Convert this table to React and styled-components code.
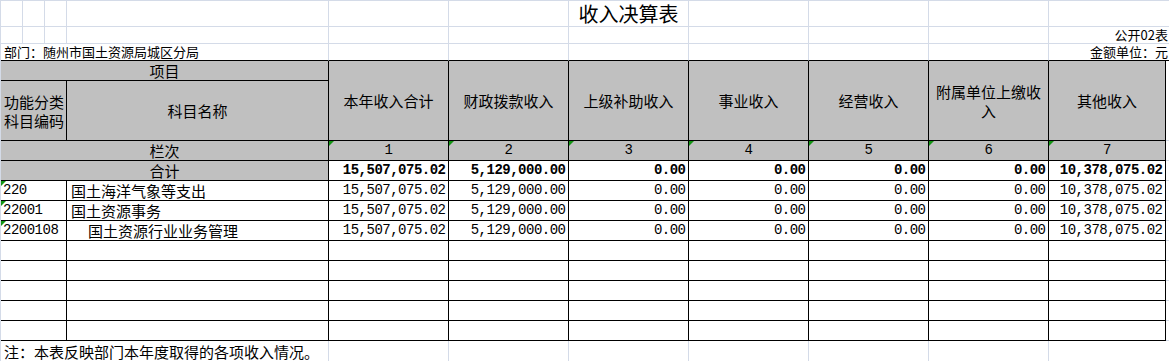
import styled, { createGlobalStyle, css } from "styled-components";

const GRID = "#d4dbe8";

const Global = createGlobalStyle`
  html, body {
    margin: 0;
    padding: 0;
    background: #fff;
  }
`;

const Sheet = styled.div`
  display: grid;
  grid-template-columns: 22px 22px 22px 262px repeat(6, 120px) 117px 1fr;
  grid-template-rows: 26px 17px 17px 20px 60px repeat(10, 20px) 21px;
  width: 1169px;
  height: 361px;
  box-sizing: border-box;
  overflow: hidden;
  border-top: 1px solid ${GRID};
  border-left: 1px solid ${GRID};
  background: #fff;
`;

const mark = css`
  &::before {
    content: "";
    position: absolute;
    top: 0;
    left: 0;
    border-top: 5px solid #149414;
    border-right: 5px solid transparent;
  }
`;

const Cell = styled.div`
  box-sizing: border-box;
  position: relative;
  grid-column: span ${(p) => p.$span || 1};
  grid-row: span ${(p) => p.$rows || 1};
  display: flex;
  align-items: center;
  justify-content: ${(p) =>
    p.$align === "right" ? "flex-end" : p.$align === "left" ? "flex-start" : "center"};
  text-align: ${(p) => p.$align || "center"};
  padding: 0 2px 0 ${(p) => (p.$indent != null ? p.$indent : 2)}px;
  border-right: 1px solid ${(p) => (p.$edge ? "#000" : GRID)};
  border-bottom: 1px solid ${(p) => (p.$base ? "#000" : GRID)};
  background: ${(p) => (p.$fill ? "#c0c0c0" : "#fff")};
  color: #000;
  font-family: "Noto Sans CJK SC", "Liberation Sans", sans-serif;
  font-size: 15px;
  line-height: 19px;
  white-space: nowrap;
  overflow: visible;
  ${(p) => p.$mark && mark}
`;

const Title = styled(Cell)`
  font-size: 20px;
  line-height: 24px;
  padding: 0;
`;

const Caption = styled(Cell)`
  font-size: 13px;
  line-height: 16px;
`;

const Head = styled(Cell)`
  white-space: normal;
  padding: 0 6px;
`;

const Stub = styled(Cell)`
  white-space: normal;
  padding: 0 0 0 3px;
`;

const Num = styled(Cell)`
  font-family: "Liberation Mono", monospace;
  font-size: 14px;
  letter-spacing: -0.5px;
  padding-right: ${(p) => (p.$align === "right" ? 2.5 : 2)}px;
  font-weight: ${(p) => (p.$bold ? 700 : 400)};
`;

const columns = [
  "本年收入合计",
  "财政拨款收入",
  "上级补助收入",
  "事业收入",
  "经营收入",
  "附属单位上缴收入",
  "其他收入",
];

const totals = [
  "15,507,075.02",
  "5,129,000.00",
  "0.00",
  "0.00",
  "0.00",
  "0.00",
  "10,378,075.02",
];

const items = [
  { code: "220", name: "国土海洋气象等支出", indent: 4 },
  { code: "22001", name: "国土资源事务", indent: 4 },
  { code: "2200108", name: "国土资源行业业务管理", indent: 21 },
];

const blanks = (n, props = {}) =>
  Array.from({ length: n }, (_, i) => <Cell key={i} {...props} />);

export default function App() {
  return (
    <>
      <Global />
      <Sheet>
        {/* row 1 */}
        {blanks(6)}
        <Title>收入决算表</Title>
        {blanks(3)}
        <Cell $span={2} />

        {/* row 2 */}
        {blanks(10)}
        <Caption $span={2} $align="right">
          公开02表
        </Caption>

        {/* row 3 */}
        <Caption $span={4} $align="left" $indent={3} $base>
          部门：随州市国土资源局城区分局
        </Caption>
        {blanks(6, { $base: true })}
        <Caption $span={2} $align="right" $base>
          金额单位：元
        </Caption>

        {/* header */}
        <Cell $span={4} $fill $edge $base>
          项目
        </Cell>
        {columns.map((c) => (
          <Head key={c} $rows={2} $fill $edge $base>
            {c}
          </Head>
        ))}
        <Cell $rows={2} />
        <Stub $span={3} $align="left" $fill $edge $base>
          功能分类科目编码
        </Stub>
        <Cell $fill $edge $base>
          科目名称
        </Cell>

        {/* 栏次 */}
        <Cell $span={4} $fill $edge $base>
          栏次
        </Cell>
        {columns.map((c, i) => (
          <Num key={c} $fill $edge $base $mark>
            {i + 1}
          </Num>
        ))}
        <Cell />

        {/* 合计 */}
        <Cell $span={4} $fill $edge $base>
          合计
        </Cell>
        {totals.map((v, i) => (
          <Num key={i} $align="right" $bold $edge $base>
            {v}
          </Num>
        ))}
        <Cell />

        {/* data rows */}
        {items.map((row) => [
          <Num key={row.code + "c"} $span={3} $align="left" $indent={2} $edge $base $mark>
            {row.code}
          </Num>,
          <Cell key={row.code + "n"} $align="left" $indent={row.indent} $edge $base>
            {row.name}
          </Cell>,
          ...totals.map((v, i) => (
            <Num key={row.code + i} $align="right" $edge $base>
              {v}
            </Num>
          )),
          <Cell key={row.code + "t"} />,
        ])}

        {/* empty rows */}
        {Array.from({ length: 5 }, (_, r) => [
          <Cell key={r + "a"} $span={3} $edge $base />,
          ...Array.from({ length: 8 }, (_, i) => (
            <Cell key={r + "b" + i} $edge $base />
          )),
          <Cell key={r + "t"} />,
        ])}

        {/* note */}
        <Cell $span={4} $align="left" $indent={3}>
          注：本表反映部门本年度取得的各项收入情况。
        </Cell>
        {blanks(6)}
        <Cell $span={2} />
      </Sheet>
    </>
  );
}
